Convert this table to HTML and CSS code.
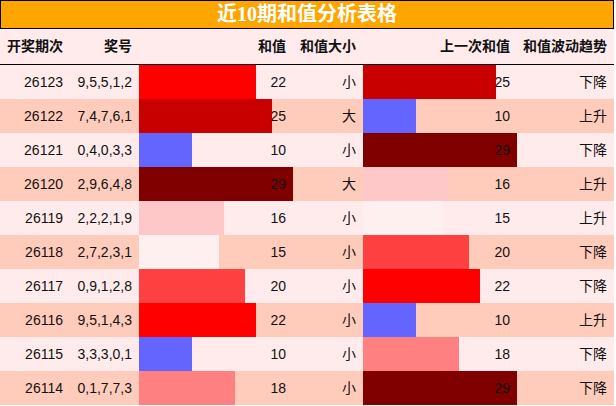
FILE: index.html
```html
<!DOCTYPE html>
<html lang="zh">
<head>
<meta charset="utf-8">
<link rel="stylesheet" href="styles.css">
</head>
<body>
<div class="sheet">
  <div class="title">近10期和值分析表格</div>
  <div class="grid head">
    <div class="c">开奖期次</div><div class="c">奖号</div><div class="c">和值</div><div class="c">和值大小</div><div class="c">上一次和值</div><div class="c">和值波动趋势</div>
  </div>
  <div class="grid row odd">
    <div class="c">26123</div><div class="c">9,5,5,1,2</div><div class="c bar" style="--w:75.86%;--c:#ff0000">22</div><div class="c">小</div><div class="c bar" style="--w:86.21%;--c:#c80000">25</div><div class="c">下降</div>
  </div>
  <div class="grid row even">
    <div class="c">26122</div><div class="c">7,4,7,6,1</div><div class="c bar" style="--w:86.21%;--c:#c80000">25</div><div class="c">大</div><div class="c bar" style="--w:34.48%;--c:#6464ff">10</div><div class="c">上升</div>
  </div>
  <div class="grid row odd">
    <div class="c">26121</div><div class="c">0,4,0,3,3</div><div class="c bar" style="--w:34.48%;--c:#6464ff">10</div><div class="c">小</div><div class="c bar" style="--w:100%;--c:#800000">29</div><div class="c">下降</div>
  </div>
  <div class="grid row even">
    <div class="c">26120</div><div class="c">2,9,6,4,8</div><div class="c bar" style="--w:100%;--c:#800000">29</div><div class="c">大</div><div class="c bar" style="--w:55.17%;--c:#ffc8c8">16</div><div class="c">上升</div>
  </div>
  <div class="grid row odd">
    <div class="c">26119</div><div class="c">2,2,2,1,9</div><div class="c bar" style="--w:55.17%;--c:#ffc8c8">16</div><div class="c">小</div><div class="c bar" style="--w:51.72%;--c:#fff0f0">15</div><div class="c">上升</div>
  </div>
  <div class="grid row even">
    <div class="c">26118</div><div class="c">2,7,2,3,1</div><div class="c bar" style="--w:51.72%;--c:#fff0f0">15</div><div class="c">小</div><div class="c bar" style="--w:68.97%;--c:#ff4040">20</div><div class="c">下降</div>
  </div>
  <div class="grid row odd">
    <div class="c">26117</div><div class="c">0,9,1,2,8</div><div class="c bar" style="--w:68.97%;--c:#ff4040">20</div><div class="c">小</div><div class="c bar" style="--w:75.86%;--c:#ff0000">22</div><div class="c">下降</div>
  </div>
  <div class="grid row even">
    <div class="c">26116</div><div class="c">9,5,1,4,3</div><div class="c bar" style="--w:75.86%;--c:#ff0000">22</div><div class="c">小</div><div class="c bar" style="--w:34.48%;--c:#6464ff">10</div><div class="c">上升</div>
  </div>
  <div class="grid row odd">
    <div class="c">26115</div><div class="c">3,3,3,0,1</div><div class="c bar" style="--w:34.48%;--c:#6464ff">10</div><div class="c">小</div><div class="c bar" style="--w:62.07%;--c:#ff8080">18</div><div class="c">下降</div>
  </div>
  <div class="grid row even">
    <div class="c">26114</div><div class="c">0,1,7,7,3</div><div class="c bar" style="--w:62.07%;--c:#ff8080">18</div><div class="c">小</div><div class="c bar" style="--w:100%;--c:#800000">29</div><div class="c">下降</div>
  </div>
</div>
</body>
</html>
```
FILE: styles.css
```css
html, body {
  margin: 0;
  padding: 0;
  background: #ffffff;
}
.sheet {
  width: 614px;
  font-family: "Liberation Sans", "Noto Sans CJK SC", sans-serif;
  font-size: 14px;
  color: #111;
}
.title {
  width: 614px;
  box-sizing: border-box;
  height: 29px;
  border: 1px solid #000;
  background: #ffa500;
  color: #fff;
  font-family: "Liberation Serif", "Noto Sans CJK SC", serif;
  font-weight: bold;
  font-size: 20px;
  line-height: 27px;
  text-align: center;
}
.grid {
  display: grid;
  grid-template-columns: 70px 69px 154px 70px 154px 97px;
}
.head {
  height: 35px;
  background: #ffebeb;
  border-bottom: 1px solid #000;
  font-weight: bold;
  line-height: 35px;
}
.row {
  height: 34px;
  line-height: 34px;
}
.odd { background: #ffebeb; }
.even { background: #ffccbb; }
.c {
  text-align: right;
  padding-right: 7px;
  white-space: nowrap;
}
.bar {
  background: linear-gradient(to right, var(--c) var(--w), transparent var(--w));
}
```
